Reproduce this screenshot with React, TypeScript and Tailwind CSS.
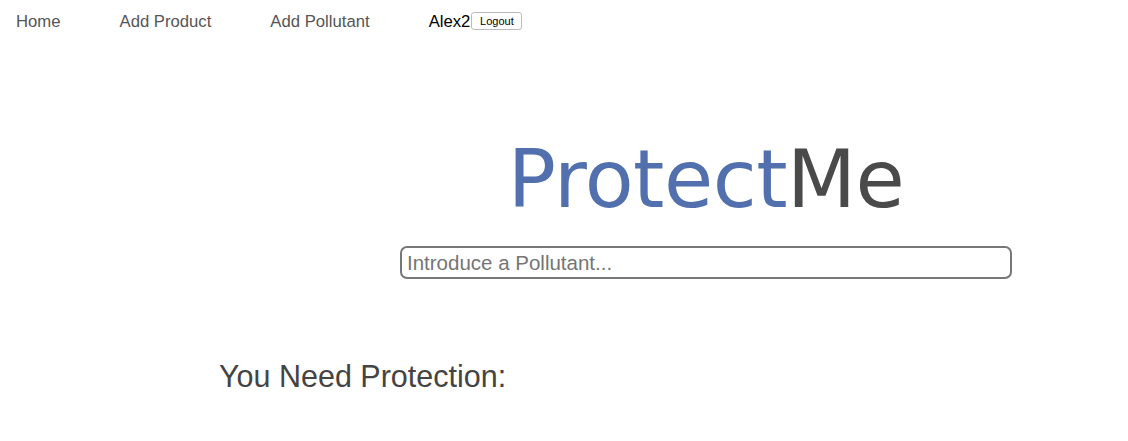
export default function App() {
  return (
    <div className="min-h-[441px] bg-white font-['Liberation_Sans',Arial,sans-serif]">
      {/* top nav */}
      <nav className="flex items-center h-[43px] pl-4 gap-[59px] text-[16.7px] text-[#555]">
        <a className="cursor-pointer">Home</a>
        <a className="cursor-pointer">Add Product</a>
        <a className="cursor-pointer">Add Pollutant</a>
        <div className="flex items-center text-black">
          <span>Alex2</span>
          <button className="ml-[1px] h-[18px] w-[51px] text-[11px] leading-none text-black bg-white border border-[#bbb] rounded-[3px]">
            Logout
          </button>
        </div>
      </nav>

      <div className="ml-[400px] w-[612px] mt-[97px] flex flex-col items-center">
        <h1 className="font-['DejaVu_Sans',Verdana,sans-serif] text-[80px] leading-none tracking-[-0.5px]">
          <span className="text-[#5170ad]">Protect</span>
          <span className="text-[#4a4a4a]">Me</span>
        </h1>
        <input
          className="mt-[26px] w-full h-[33px] px-[5px] text-[20.5px] text-[#333] placeholder:text-[#757575] border-2 border-[#777] rounded-[7px] outline-none"
          placeholder="Introduce a Pollutant..."
        />
      </div>

      <h2 className="ml-[219px] mt-[77px] text-[30.5px] leading-[40px] text-[#444]">You Need Protection:</h2>
    </div>
  );
}
